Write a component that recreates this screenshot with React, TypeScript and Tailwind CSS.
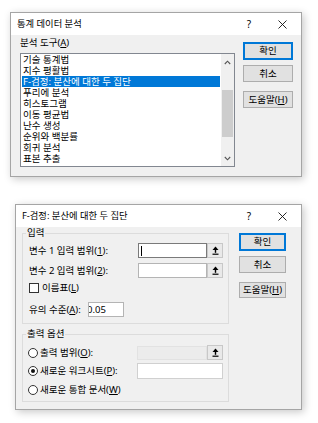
import React from 'react';

const FONT = { fontFamily: '"Noto Sans", "Noto Sans CJK KR", sans-serif' };

const Key: React.FC<{ k: string }> = ({ k }) => (
  <span className="underline underline-offset-[1px] decoration-[0.5px]">{k}</span>
);

const CloseIcon = () => (
  <svg width="9" height="9" viewBox="0 0 9 9">
    <path d="M0.5 0.5 L8.5 8.5 M8.5 0.5 L0.5 8.5" stroke="#111" strokeWidth="0.9" />
  </svg>
);

const TitleBar: React.FC<{ title: string }> = ({ title }) => (
  <div className="h-[22px] bg-white flex items-center pl-[6px] text-[9.3px] leading-[10px]">
    <span className="flex-1">{title}</span>
    <span className="w-[10px] text-center text-[10px] mr-[24px]">?</span>
    <span className="mr-[14px] flex items-center">
      <CloseIcon />
    </span>
  </div>
);

const Btn: React.FC<{ children: React.ReactNode; focus?: boolean; className?: string }> = ({
  children,
  focus,
  className,
}) => (
  <div
    className={
      'flex items-center justify-center bg-[#e1e1e1] border text-[9.5px] leading-[10px] ' +
      (focus ? 'border-[#0078d7] shadow-[inset_0_0_0_1px_#0078d7] ' : 'border-[#adadad] ') +
      (className ?? '')
    }
  >
    {children}
  </div>
);

const PickIcon = () => (
  <svg width="7" height="9" viewBox="0 0 7 9">
    <path d="M3.5 0.5 L6.5 4 H0.5 Z" fill="#000" />
    <rect x="2.8" y="3.5" width="1.4" height="3.3" fill="#000" />
    <rect x="0.5" y="7.6" width="6" height="1.2" fill="#000" />
  </svg>
);

const PickBtn = () => (
  <div className="w-[16px] h-[15px] bg-[#e9e9e9] border border-[#c8c8c8] flex items-center justify-center">
    <PickIcon />
  </div>
);

const Radio: React.FC<{ on?: boolean }> = ({ on }) => (
  <div className="w-[10px] h-[10px] rounded-full border border-[#333] bg-white flex items-center justify-center">
    {on && <div className="w-[4px] h-[4px] rounded-full bg-[#111]" />}
  </div>
);

const tools = [
  '기술 통계법',
  '지수 평활법',
  'F-검정: 분산에 대한 두 집단',
  '푸리에 분석',
  '히스토그램',
  '이동 평균법',
  '난수 생성',
  '순위와 백분률',
  '회귀 분석',
  '표본 추출',
];

const Chevron: React.FC<{ down?: boolean }> = ({ down }) => (
  <svg width="7" height="5" viewBox="0 0 7 5">
    <path
      d={down ? 'M0.8 1 L3.5 3.8 L6.2 1' : 'M0.8 4 L3.5 1.2 L6.2 4'}
      stroke="#555"
      strokeWidth="1.1"
      fill="none"
    />
  </svg>
);

const AnalysisDialog = () => (
  <div className="ml-[10px] w-[292px] h-[165px] border border-[#a5a5a5] bg-[#f0f0f0] shadow-[2px_2px_8px_rgba(0,0,0,0.22)] flex flex-col">
    <TitleBar title="통계 데이터 분석" />
    <div className="flex flex-1 pl-[9px]">
      <div className="flex flex-col">
        <div className="mt-[3px] h-[10px] text-[9.5px] leading-[10px]">
          분석 도구(<Key k="A" />)
        </div>
        <div className="mt-[5px] w-[215px] h-[114px] border border-[#828790] bg-white flex">
          <div className="flex-1 px-[1px] text-[9.5px] leading-[11px] overflow-hidden">
            {tools.map((t, i) => (
              <div
                key={i}
                className={'h-[11px] whitespace-nowrap pl-[1px] ' + (i === 2 ? 'bg-[#0078d7] text-white' : '')}
              >
                {t}
              </div>
            ))}
          </div>
          <div className="w-[13px] bg-[#f0f0f0] flex flex-col items-center">
            <div className="h-[16px] flex items-center justify-center">
              <Chevron />
            </div>
            <div className="flex-1 w-full px-[1px] pt-[20px]">
              <div className="h-[47px] bg-[#cdcdcd]" />
            </div>
            <div className="h-[16px] flex items-center justify-center">
              <Chevron down />
            </div>
          </div>
        </div>
      </div>
      <div className="ml-[8px] mt-[7px] flex flex-col w-[50px]">
        <Btn focus className="h-[18px]">
          확인
        </Btn>
        <Btn className="h-[17px] mt-[5px]">취소</Btn>
        <Btn className="h-[17px] mt-[9px]">
          도움말(<Key k="H" />)
        </Btn>
      </div>
    </div>
  </div>
);

const FTestDialog = () => (
  <div className="ml-[15px] mt-[27px] w-[287px] h-[206px] border border-[#a5a5a5] bg-[#f0f0f0] shadow-[2px_2px_8px_rgba(0,0,0,0.22)] flex flex-col">
    <TitleBar title="F-검정: 분산에 대한 두 집단" />
    <div className="flex flex-1 pl-[6px] text-[9.5px] leading-[10px]">
      <div className="flex flex-col w-[207px]">
        <fieldset className="mt-[1px] h-[96px] border border-[#dcdcdc] flex flex-col">
          <legend className="ml-[3px] px-[1px] leading-[10px]">입력</legend>
          <div className="mt-[5px] flex items-center h-[15px]">
            <span className="w-[115px] pl-[6px]">
              변수 1 입력 범위(<Key k="1" />):
            </span>
            <div className="w-[69px] h-[15px] bg-white border border-[#7a7a7a] flex items-center pl-[2px]">
              <div className="w-[1px] h-[10px] bg-black" />
            </div>
            <PickBtn />
          </div>
          <div className="mt-[5px] flex items-center h-[15px]">
            <span className="w-[115px] pl-[6px]">
              변수 2 입력 범위(<Key k="2" />):
            </span>
            <div className="w-[69px] h-[15px] bg-white border border-[#b4b4b4]" />
            <PickBtn />
          </div>
          <div className="mt-[5px] flex items-center h-[10px] pl-[6px]">
            <div className="w-[10px] h-[10px] border border-[#333] bg-white" />
            <span className="ml-[3px]">
              이름표(<Key k="L" />)
            </span>
          </div>
          <div className="mt-[9px] flex items-center h-[15px]">
            <span className="w-[65px] pl-[6px]">
              유의 수준(<Key k="A" />):
            </span>
            <div className="w-[36px] h-[15px] bg-white border border-[#b4b4b4] flex items-center overflow-hidden">
              <span className="-ml-[2px]">0.05</span>
            </div>
          </div>
        </fieldset>
        <fieldset className="mt-[5px] h-[73px] border border-[#dcdcdc] flex flex-col">
          <legend className="ml-[3px] px-[1px] leading-[10px]">출력 옵션</legend>
          <div className="mt-[6px] flex items-center h-[15px]">
            <div className="w-[114px] pl-[5px] flex items-center">
              <Radio />
              <span className="ml-[2px]">
                출력 범위(<Key k="O" />):
              </span>
            </div>
            <div className="w-[70px] h-[14px] bg-[#ececec] border border-[#e2e2e2]" />
            <PickBtn />
          </div>
          <div className="mt-[3px] flex items-center h-[16px]">
            <div className="w-[114px] pl-[5px] flex items-center">
              <Radio on />
              <span className="ml-[2px]">
                새로운 워크시트(<Key k="P" />):
              </span>
            </div>
            <div className="w-[86px] h-[16px] bg-white border border-[#d0d0d0]" />
          </div>
          <div className="mt-[5px] flex items-center h-[12px] pl-[5px]">
            <Radio />
            <span className="ml-[2px]">
              새로운 통합 문서(<Key k="W" />)
            </span>
          </div>
        </fieldset>
      </div>
      <div className="ml-[10px] mt-[6px] flex flex-col w-[47px]">
        <Btn focus className="h-[18px]">
          확인
        </Btn>
        <Btn className="h-[17px] mt-[5px]">취소</Btn>
        <Btn className="h-[16px] mt-[9px]">
          도움말(<Key k="H" />)
        </Btn>
      </div>
    </div>
  </div>
);

export default function App() {
  return (
    <div className="w-[318px] h-[423px] bg-white pt-[12px] text-black overflow-hidden" style={FONT}>
      <AnalysisDialog />
      <FTestDialog />
    </div>
  );
}
